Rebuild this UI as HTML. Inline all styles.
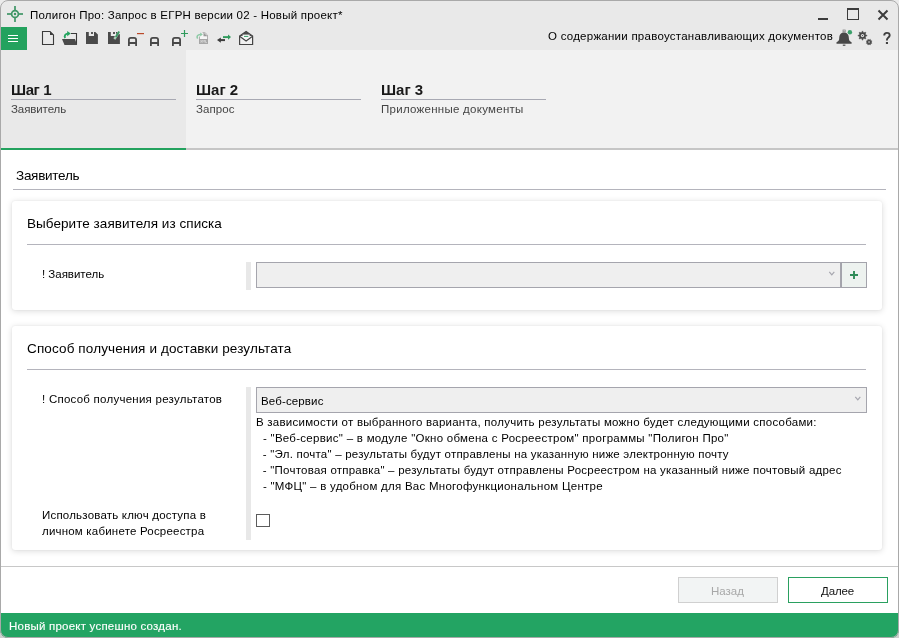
<!DOCTYPE html>
<html><head><meta charset="utf-8">
<style>
*{margin:0;padding:0;box-sizing:border-box}
html,body{width:899px;height:638px;overflow:hidden;background:linear-gradient(#ebebeb 0,#ebebeb 50%,#cfcfcf 50%,#cfcfcf 100%)}
body{font-family:"Liberation Sans",sans-serif;color:#000;position:relative}
.a{position:absolute}
.t{position:absolute;white-space:pre;line-height:1;will-change:transform}
#clip{position:absolute;left:0;top:0;width:899px;height:638px;border-radius:8px;overflow:hidden;background:#fff}
#frame{position:absolute;left:0;top:0;width:899px;height:638px;border:1px solid #a9a9a9;border-radius:8px;pointer-events:none;z-index:10}
.shag{font-size:15px;font-weight:bold;color:#1a1a1a}
.sub{font-size:11.5px;color:#444}
.uline{height:1px;background:#a8a9b3}
.card{background:#fff;border-radius:3px;box-shadow:0 1px 6px rgba(0,0,0,0.15),0 0 1.5px rgba(0,0,0,0.08)}
.lbl{font-size:11.5px;color:#000}
.bar{background:#e8e8e8}
.dd{background:#efefef;border:1px solid #a5a5ad}
</style></head><body>
<div id="clip">
  <div class="a" style="left:0;top:0;width:899px;height:50px;background:#e9e9e9"></div>
  <div class="a" style="left:0;top:50px;width:899px;height:98px;background:#f2f2f2"></div>
  <div class="a" style="left:0;top:50px;width:186px;height:98px;background:#e9e9e9"></div>
  <div class="a" style="left:0;top:148px;width:899px;height:2px;background:#c6c6c6"></div>
  <div class="a" style="left:0;top:148px;width:186px;height:2px;background:#23a25e"></div>
  <div class="a" style="left:0;top:613px;width:899px;height:25px;background:#23a463"></div>
</div>
<div id="frame"></div>

<!-- app icon -->
<svg class="a" style="left:6px;top:5px" width="18" height="18" viewBox="0 0 18 18">
  <g stroke="#3f9566" stroke-width="1.7" fill="none">
    <circle cx="9" cy="9" r="3.4"/>
    <line x1="1" y1="9" x2="5.5" y2="9"/><line x1="12.5" y1="9" x2="17" y2="9"/>
    <line x1="9" y1="1" x2="9" y2="5.5"/><line x1="9" y1="12.5" x2="9" y2="17"/>
  </g>
  <circle cx="9" cy="9" r="1.25" fill="#3f9566"/>
</svg>
<div class="t" style="left:29.5px;top:9.5px;font-size:11.5px;color:#000;letter-spacing:0.22px">Полигон Про: Запрос в ЕГРН версии 02 - Новый проект*</div>

<!-- window controls -->
<div class="a" style="left:818px;top:18px;width:10px;height:2px;background:#3c3c3c"></div>
<div class="a" style="left:847px;top:8px;width:12px;height:12px;border:1px solid #3c3c3c;border-top-width:2px"></div>
<svg class="a" style="left:877px;top:9px" width="12" height="12" viewBox="0 0 12 12">
  <path d="M1.5 1.5L10.5 10.5M10.5 1.5L1.5 10.5" stroke="#3c3c3c" stroke-width="2"/>
</svg>

<!-- hamburger -->
<div class="a" style="left:1px;top:27px;width:26px;height:23px;background:#23a25e"></div>
<div class="a" style="left:8px;top:35px;width:10px;height:1.3px;background:#fff"></div>
<div class="a" style="left:8px;top:38px;width:10px;height:1.3px;background:#fff"></div>
<div class="a" style="left:8px;top:41px;width:10px;height:1.3px;background:#fff"></div>


<!-- toolbar icons -->
<svg class="a" style="left:0;top:0" width="899" height="50" viewBox="0 0 899 50">
  <!-- new doc -->
  <path d="M42.5 31.5H50L53.5 35V44.5H42.5Z" fill="none" stroke="#3a3a3a" stroke-width="1.1"/>
  <path d="M50 31.5V35H53.5Z" fill="#3a3a3a"/>
  <!-- open folder -->
  <path d="M71 33.5H76.5V44.8" fill="none" stroke="#3a3a3a" stroke-width="1.1"/>
  <path d="M62 39H75L77 45H64.5Z" fill="#4a4a4a"/>
  <path d="M65.2 38C63.8 35.8 65.5 33.6 68 33.6" fill="none" stroke="#22a45e" stroke-width="1.9"/>
  <path d="M67.2 31L70.8 33.6L67.2 36.2Z" fill="#22a45e"/>
  <!-- save -->
  <path d="M86 32H88.8V36H94V32H95.3L97.9 34.5V44H86Z" fill="#4a4a4a"/>
  <rect x="91" y="32.2" width="2" height="1.6" fill="#333"/>
  <!-- save as -->
  <path d="M108 32H110.8V36H116V32H117.3L119.9 34.5V44H108Z" fill="#4a4a4a"/>
  <rect x="113" y="32.2" width="2" height="1.6" fill="#333"/>
  <path d="M114.4 39L119.2 31.6" stroke="#d8e6dc" stroke-width="2.6" stroke-opacity="0.6"/>
  <path d="M115.6 37.2L119.2 31.6" stroke="#3a9a64" stroke-width="1.8"/><path d="M114.4 39L115.8 36.9" stroke="#a6d4b8" stroke-width="1.6"/>
  <!-- A- -->
  <path d="M128.9 46V39.8Q128.9 37.8 130.9 37.8H134.1Q136.1 37.8 136.1 39.8V46M128.9 43H136.1" fill="none" stroke="#484848" stroke-width="1.8"/>
  <rect x="137" y="33" width="7" height="1.2" fill="#bb4a2a"/>
  <!-- A -->
  <path d="M150.9 46V39.8Q150.9 37.8 152.9 37.8H156.1Q158.1 37.8 158.1 39.8V46M150.9 43H158.1" fill="none" stroke="#484848" stroke-width="1.8"/>
  <!-- A+ -->
  <path d="M172.9 46V39.8Q172.9 37.8 174.9 37.8H178.1Q180.1 37.8 180.1 39.8V46M172.9 43H180.1" fill="none" stroke="#484848" stroke-width="1.8"/>
  <path d="M181 33.5H188M184.5 30V37" stroke="#2f9a5c" stroke-width="1.2"/>
  <!-- xml export disabled -->
  <path d="M199.5 36.5V43.5H207.5V35L205 32.7H202.5" fill="#f6f6f6" stroke="#b0b0b0" stroke-width="1"/>
  <path d="M203.5 32.5L207.6 36.2H203.5Z" fill="#9a9a9a"/>
  <rect x="199" y="39" width="9" height="5" fill="#a6a6a6"/>
  <path d="M200.5 40.2L202 42.6M202 40.2L200.5 42.6M202.8 42.6V40.2L203.8 41.4L204.8 40.2V42.6M205.6 40.2V42.6H207" fill="none" stroke="#dedede" stroke-width="0.7"/>
  <path d="M197.6 38.6C196.2 36.4 197.6 34.2 200.8 34.4" fill="none" stroke="#8ccaa5" stroke-width="1.5"/>
  <path d="M200.2 32.4L202.8 34.4L200.2 36.4Z" fill="#8ccaa5"/>
  <!-- arrows -->
  <path d="M223 37.1H228.5" stroke="#2f9a5c" stroke-width="1.9"/>
  <path d="M228 34.4L231 37.1L228 39.8Z" fill="#2f9a5c"/>
  <path d="M220 40.1H225" stroke="#3c3c3c" stroke-width="2"/>
  <path d="M220.8 37.6L217 40.1L220.8 42.8Z" fill="#3c3c3c"/>
  <!-- envelope -->
  <path d="M239.6 36V44.5H252.6V36L246.1 31.4Z" fill="#f0f0f0" stroke="#444" stroke-width="1.2"/>
  <path d="M239.6 36L246.1 31.4L252.6 36Z" fill="#4a4a4a"/>
  <rect x="242.6" y="34.6" width="7" height="4.6" fill="#f7f7f7"/>
  <path d="M239.6 36.3L246.1 41L252.6 36.3" fill="none" stroke="#444" stroke-width="1.1"/>
  <path d="M244 36.4H248.3" stroke="#3aa06a" stroke-width="1"/>
  <!-- bell -->
  <path d="M844 32.6C840.6 32.6 839.3 35 839.2 38.5C839.1 40.6 838.5 41.4 836.5 42.2V43.8H851.6V42.2C849.6 41.4 849 40.6 848.9 38.5C848.8 35 847.5 32.6 844 32.6Z" fill="#484848"/>
  <rect x="843" y="30" width="2.2" height="1.8" fill="none" stroke="#777" stroke-width="0.7"/>
  <rect x="842.8" y="44.6" width="2.6" height="1.2" fill="#484848"/>
  <circle cx="849.9" cy="32.2" r="2.2" fill="#3aa06a"/>
  <!-- gears -->
  <polygon points="862.50,30.90 863.65,32.83 865.82,32.28 865.27,34.45 867.20,35.60 865.27,36.75 865.82,38.92 863.65,38.37 862.50,40.30 861.35,38.37 859.18,38.92 859.73,36.75 857.80,35.60 859.73,34.45 859.18,32.28 861.35,32.83" fill="#484848" stroke="#484848" stroke-width="0.5" stroke-linejoin="round"/>
  <circle cx="862.5" cy="35.6" r="1.6" fill="#e9e9e9"/>
  <circle cx="862.5" cy="35.6" r="0.7" fill="#484848"/>
  <polygon points="870.29,39.24 870.66,40.54 871.96,40.91 871.30,42.10 871.96,43.29 870.66,43.66 870.29,44.96 869.10,44.30 867.91,44.96 867.54,43.66 866.24,43.29 866.90,42.10 866.24,40.91 867.54,40.54 867.91,39.24 869.10,39.90" fill="#484848" stroke="#484848" stroke-width="0.4" stroke-linejoin="round"/>
  <circle cx="869.1" cy="42.1" r="1.1" fill="#9a9a9a"/>
</svg>
<svg class="a" style="left:880px;top:30px" width="14" height="16" viewBox="880 30 14 16">
  <path d="M884.2 35.6C884.2 33.8 885.3 32.9 886.9 32.9C888.6 32.9 889.7 33.9 889.7 35.3C889.7 36.6 888.9 37.2 888.1 37.8C887.3 38.4 886.9 38.9 886.9 40.2V40.6" fill="none" stroke="#404040" stroke-width="1.9"/>
  <rect x="885.9" y="42" width="2.1" height="2" fill="#404040"/>
</svg>

<!-- toolbar right -->
<div class="t" style="left:548px;top:31px;font-size:11.5px;color:#000;letter-spacing:0.25px">О содержании правоустанавливающих документов</div>

<!-- tabs -->
<div class="t shag" style="left:11px;top:82px;letter-spacing:-0.4px">Шаг 1</div>
<div class="a uline" style="left:11px;top:99px;width:165px"></div>
<div class="t sub" style="left:11px;top:103.5px;letter-spacing:-0.1px">Заявитель</div>
<div class="t shag" style="left:196px;top:82px">Шаг 2</div>
<div class="a uline" style="left:196px;top:99px;width:165px"></div>
<div class="t sub" style="left:196px;top:103.5px;letter-spacing:0.1px">Запрос</div>
<div class="t shag" style="left:381px;top:82px">Шаг 3</div>
<div class="a uline" style="left:381px;top:99px;width:165px"></div>
<div class="t sub" style="left:381px;top:103.5px;letter-spacing:0.27px">Приложенные документы</div>

<!-- content heading -->
<div class="t" style="left:16px;top:168.5px;font-size:13.5px;color:#000;letter-spacing:-0.27px">Заявитель</div>
<div class="a" style="left:13px;top:189px;width:873px;height:1px;background:#b4b4bc"></div>

<!-- card1 -->
<div class="a card" style="left:12px;top:201px;width:870px;height:109px"></div>
<div class="t" style="left:27px;top:216.5px;font-size:13.5px;letter-spacing:0.05px">Выберите заявителя из списка</div>
<div class="a" style="left:27px;top:244px;width:839px;height:1px;background:#b4b4bc"></div>
<div class="t lbl" style="left:42px;top:268.5px;letter-spacing:-0.02px">! Заявитель</div>
<div class="a bar" style="left:246px;top:262px;width:5px;height:28px"></div>
<div class="a dd" style="left:256px;top:262px;width:585px;height:26px"></div>
<div class="a" style="left:841px;top:262px;width:26px;height:26px;background:#edf2ef;border:1px solid #a3a3ab"></div>
<svg class="a" style="left:820px;top:260px" width="50" height="30" viewBox="820 260 50 30">
  <path d="M829.3 271.8L831.8 274.8L834.3 271.8" fill="none" stroke="#a6a6ae" stroke-width="1.2"/>
  <path d="M850 275H858M854 271V279" stroke="#2e8b57" stroke-width="1.9"/>
</svg>

<!-- card2 -->
<div class="a card" style="left:12px;top:326px;width:870px;height:224px"></div>
<div class="t" style="left:27px;top:341.5px;font-size:13.5px;letter-spacing:0.13px">Способ получения и доставки результата</div>
<div class="a" style="left:27px;top:369px;width:839px;height:1px;background:#b4b4bc"></div>
<div class="t lbl" style="left:42px;top:393.5px;letter-spacing:0.25px">! Способ получения результатов</div>
<div class="a bar" style="left:246px;top:387px;width:5px;height:153px"></div>
<div class="a dd" style="left:256px;top:387px;width:611px;height:26px"></div>
<svg class="a" style="left:850px;top:390px" width="15" height="15" viewBox="850 390 15 15">
  <path d="M855.3 396.8L857.8 399.8L860.3 396.8" fill="none" stroke="#a6a6ae" stroke-width="1.2"/>
</svg>
<div class="t lbl" style="left:261px;top:395.5px;letter-spacing:0.14px">Веб-сервис</div>
<div class="t lbl" style="left:256px;top:416.5px;letter-spacing:0.245px">В зависимости от выбранного варианта, получить результаты можно будет следующими способами:</div>
<div class="t lbl" style="left:256px;top:432.5px;letter-spacing:0.277px">  - "Веб-сервис" – в модуле "Окно обмена с Росреестром" программы "Полигон Про"</div>
<div class="t lbl" style="left:256px;top:448.5px;letter-spacing:0.22px">  - "Эл. почта" – результаты будут отправлены на указанную ниже электронную почту</div>
<div class="t lbl" style="left:256px;top:464.5px;letter-spacing:0.225px">  - "Почтовая отправка" – результаты будут отправлены Росреестром на указанный ниже почтовый адрес</div>
<div class="t lbl" style="left:256px;top:480.5px;letter-spacing:0.26px">  - "МФЦ" – в удобном для Вас Многофункциональном Центре</div>
<div class="t lbl" style="left:42px;top:507px;line-height:16px;letter-spacing:0.2px">Использовать ключ доступа в
личном кабинете Росреестра</div>
<div class="a" style="left:256px;top:514px;width:14px;height:13px;border:1px solid #5c5c5c"></div>

<!-- footer -->
<div class="a" style="left:1px;top:566px;width:897px;height:1px;background:#c8c8c8"></div>
<div class="a" style="left:678px;top:577px;width:100px;height:26px;background:#f2f4f4;border:1px solid #d0d0d0"></div>
<div class="t" style="left:711px;top:585.5px;font-size:11.5px;color:#a8a8a8;letter-spacing:0px">Назад</div>
<div class="a" style="left:788px;top:577px;width:100px;height:26px;background:#fff;border:1px solid #2aa060"></div>
<div class="t" style="left:821px;top:585.5px;font-size:11.5px;color:#111;letter-spacing:-0.15px">Далее</div>

<!-- status -->

<div class="t" style="left:9px;top:620.5px;font-size:11.5px;color:#fff;letter-spacing:0.22px;-webkit-text-stroke:0.12px #fff">Новый проект успешно создан.</div>
</body></html>
